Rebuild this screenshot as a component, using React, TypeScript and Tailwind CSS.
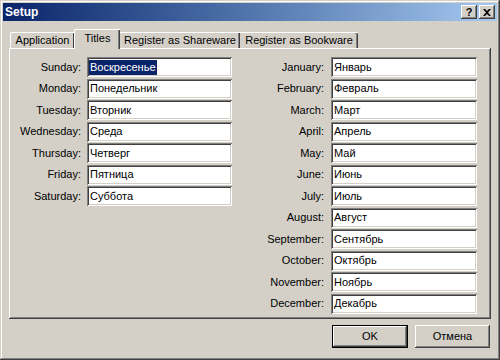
const days = [
  ["Sunday", "Воскресенье"],
  ["Monday", "Понедельник"],
  ["Tuesday", "Вторник"],
  ["Wednesday", "Среда"],
  ["Thursday", "Четверг"],
  ["Friday", "Пятница"],
  ["Saturday", "Суббота"],
];

const months = [
  ["January", "Январь"],
  ["February", "Февраль"],
  ["March", "Март"],
  ["April", "Апрель"],
  ["May", "Май"],
  ["June", "Июнь"],
  ["July", "Июль"],
  ["August", "Август"],
  ["September", "Сентябрь"],
  ["October", "Октябрь"],
  ["November", "Ноябрь"],
  ["December", "Декабрь"],
];

const raised =
  "shadow-[inset_-1px_-1px_0_#404040,inset_1px_1px_0_#fff,inset_-2px_-2px_0_#808080]";

const Field = ({ value, selected }: { value: string; selected?: boolean }) => (
  <div className="h-[20px] bg-white pl-[2px] flex items-center text-black shadow-[inset_1px_1px_0_#808080,inset_-1px_-1px_0_#fff,inset_2px_2px_0_#404040,inset_-2px_-2px_0_#d4d0c8]">
    {selected ? (
      <span className="bg-[#0a246a] text-white leading-[15px] px-px">{value}</span>
    ) : (
      <span className="px-px">{value}</span>
    )}
  </div>
);

const Row = ({
  label,
  value,
  labelWidth,
  fieldWidth,
  gap,
  selected,
}: {
  label: string;
  value: string;
  labelWidth: string;
  fieldWidth: string;
  gap: string;
  selected?: boolean;
}) => (
  <div className={`flex items-center h-[20px] ${gap}`}>
    <span className={`${labelWidth} text-right text-black`}>{label}:</span>
    <div className={fieldWidth}>
      <Field value={value} selected={selected} />
    </div>
  </div>
);

const App = () => {
  return (
    <div
      className="w-[500px] h-[360px] bg-[#d4d0c8] p-[3px] flex flex-col text-[11px] shadow-[inset_-1px_-1px_0_#404040,inset_1px_1px_0_#d4d0c8,inset_-2px_-2px_0_#808080,inset_2px_2px_0_#fff]"
      style={{ fontFamily: '"Liberation Sans", Arial, sans-serif' }}
    >
      {/* title bar */}
      <div className="h-[18px] flex items-center justify-between pl-[2px] pr-[2px] bg-linear-to-r from-[#0a246a] to-[#a6caf0]">
        <span className="text-white font-bold text-[12px]">Setup</span>
        <div className="flex gap-[2px]">
          <div className={`w-[16px] h-[14px] bg-[#d4d0c8] flex items-center justify-center font-bold text-[11px] text-black leading-none ${raised}`}>
            ?
          </div>
          <div className={`w-[16px] h-[14px] bg-[#d4d0c8] flex items-center justify-center ${raised}`}>
            <svg width="8" height="7" viewBox="0 0 8 7">
              <path d="M0 0h2l2 2 2-2h2L5 3.5 8 7H6L4 5 2 7H0l3-3.5z" fill="#000" />
            </svg>
          </div>
        </div>
      </div>

      {/* tabs */}
      <div className="mt-[8px] mx-[6px] pl-[1px] h-[19px] flex items-end relative z-10">
        <div className="w-[64px] h-[16px] flex items-center justify-center border-l border-t border-white rounded-tl-[2px] text-black shadow-[inset_-1px_0_0_#404040]">
          Application
        </div>
        <div className="w-[46px] h-[20px] -mb-px bg-[#d4d0c8] flex items-center justify-center border-l border-t border-white rounded-tl-[2px] text-black shadow-[inset_-1px_0_0_#404040,inset_-2px_0_0_#808080] pb-[2px]">
          Titles
        </div>
        <div className="w-[120px] h-[16px] flex items-center justify-center border-t border-white text-black shadow-[inset_-1px_0_0_#404040,inset_-2px_0_0_#808080]">
          Register as Shareware
        </div>
        <div className="w-[118px] h-[16px] flex items-center justify-center border-t border-white rounded-tr-[2px] text-black shadow-[inset_-1px_0_0_#404040,inset_-2px_0_0_#808080]">
          Register as Bookware
        </div>
      </div>

      {/* panel */}
      <div className={`mx-[6px] h-[271px] flex pt-[9px] ${raised}`}>
        <div className="flex flex-col gap-[1.5px]">
          {days.map(([d, r], i) => (
            <Row
              key={d}
              label={d}
              value={r}
              labelWidth="w-[72px]"
              fieldWidth="w-[145px]"
              gap="gap-[6px]"
              selected={i === 0}
            />
          ))}
        </div>
        <div className="ml-[20px] flex flex-col gap-[1.5px]">
          {months.map(([m, r]) => (
            <Row
              key={m}
              label={m}
              value={r}
              labelWidth="w-[72px]"
              fieldWidth="w-[146px]"
              gap="gap-[7px]"
            />
          ))}
        </div>
      </div>

      {/* buttons */}
      <div className="mt-[6px] mr-[7px] flex justify-end gap-[7px]">
        <div className="w-[76px] h-[23px] border border-black">
          <div className={`w-full h-full flex items-center justify-center text-black ${raised}`}>OK</div>
        </div>
        <div className={`w-[75px] h-[23px] flex items-center justify-center text-black ${raised}`}>Отмена</div>
      </div>
    </div>
  );
};

export default App;
